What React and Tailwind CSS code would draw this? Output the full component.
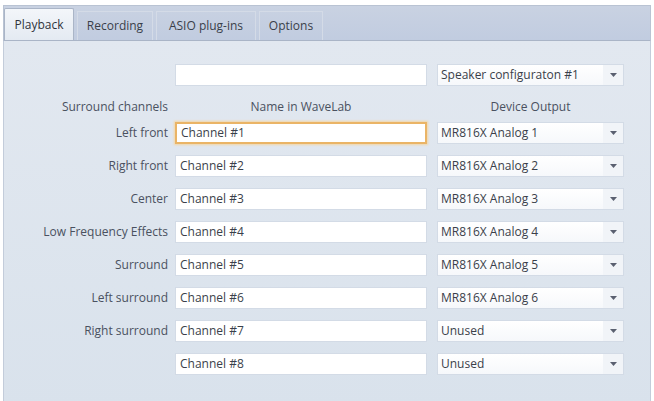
import React from "react";

const rows = [
  ["Left front", "Channel #1", "MR816X Analog 1", true],
  ["Right front", "Channel #2", "MR816X Analog 2"],
  ["Center", "Channel #3", "MR816X Analog 3"],
  ["Low Frequency Effects", "Channel #4", "MR816X Analog 4"],
  ["Surround", "Channel #5", "MR816X Analog 5"],
  ["Left surround", "Channel #6", "MR816X Analog 6"],
  ["Right surround", "Channel #7", "Unused"],
  ["", "Channel #8", "Unused"],
];

function Select({ value }) {
  return (
    <div className="ml-[10px] flex h-[22px] w-[187px] items-center border border-[#d3dbe6] bg-gradient-to-b from-white to-[#f6f8fb]">
      <span className="flex-1 whitespace-nowrap pl-[3px] leading-[16px] text-[#3a3f4a]">{value}</span>
      <div className="flex h-full w-[20px] items-center justify-center bg-[#f1f4f8]">
        <svg width="7" height="4" viewBox="0 0 7 4">
          <path d="M0 0 L7 0 L3.5 4 Z" fill="#5a6070" />
        </svg>
      </div>
    </div>
  );
}

function Input({ value, focused }) {
  return (
    <div
      className={
        "flex h-[22px] w-[252px] items-center bg-white pl-[4px] leading-[16px] text-[#3a3f4a] " +
        (focused
          ? "border-2 border-[#eab466] shadow-[0_0_2px_1px_#f3d7a6]"
          : "border border-[#d3dbe6]")
      }
    >
      {value}
    </div>
  );
}

export default function App() {
  return (
    <div
      className="h-[401px] w-[654px] overflow-hidden bg-white pt-[5px] text-[12px] leading-[16px]"
      style={{ fontFamily: '"Open Sans", "Noto Sans", sans-serif' }}
    >
      <div className="mx-[3px] flex h-[35px] items-end border border-b-0 border-[#b9c3d3] bg-gradient-to-b from-[#c9d2e2] to-[#c1cce0]">
        <div className="flex h-[32px] w-[70px] items-center justify-center rounded-t-[2px] border border-b-0 border-[#aab5c7] bg-gradient-to-b from-[#f3f6fa] to-[#e4eaf2] text-[#2f333b]">
          Playback
        </div>
        <div className="ml-[3px] flex h-[29px] w-[76px] items-center justify-center border border-b-0 border-[#d4dbe7] text-[#3a3f4a]">
          Recording
        </div>
        <div className="ml-[3px] flex h-[29px] w-[100px] items-center justify-center border border-b-0 border-[#d4dbe7] text-[#3a3f4a]">
          ASIO plug-ins
        </div>
        <div className="ml-[3px] flex h-[29px] w-[64px] items-center justify-center border border-b-0 border-[#d4dbe7] text-[#3a3f4a]">
          Options
        </div>
      </div>
      <div className="mx-[3px] h-[370px] border border-t-[#aab5c7] border-[#c3ccda] bg-gradient-to-b from-[#e2e8f0] to-[#d9e2ec] pt-[23px]">
        <div className="flex items-center">
          <div className="w-[171px]" />
          <Input value="" />
          <Select value="Speaker configuraton #1" />
        </div>
        <div className="mt-[11px] mb-[5px] flex h-[20px] items-center text-[#4a5160]">
          <div className="w-[164px] text-right">Surround channels</div>
          <div className="ml-[7px] w-[252px] text-center">Name in WaveLab</div>
          <div className="ml-[10px] w-[187px] text-center">Device Output</div>
        </div>
        <div className="flex flex-col gap-[11px]">
          {rows.map(([label, name, out, focused], i) => (
            <div key={i} className="flex items-center">
              <div className="w-[164px] text-right text-[#4a5160]">{label}</div>
              <div className="w-[7px]" />
              <Input value={name} focused={focused} />
              <Select value={out} />
            </div>
          ))}
        </div>
      </div>
    </div>
  );
}
